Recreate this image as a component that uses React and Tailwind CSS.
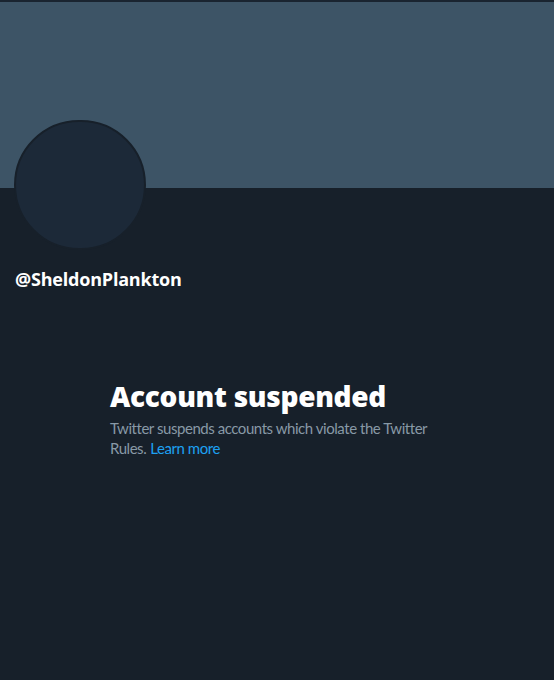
import React from 'react';

const App = () => {
  return (
    <div className="w-[554px] h-[680px] overflow-hidden bg-[#17202a] flex flex-col" style={{ fontFamily: '"Open Sans", "Noto Sans", sans-serif' }}>
      {/* top strip */}
      <div className="h-[2px] bg-[#1a2430]" />

      {/* banner */}
      <div className="h-[186px] bg-[#3d5466]" />

      {/* avatar + handle */}
      <div className="px-[14px]">
        <div className="-mt-[68px] relative w-[132px] h-[130px] rounded-full bg-[#1c2938] border-2 border-[#17202a]" />
        <div className="mt-[19px] pl-px text-white font-bold text-[18px] leading-5 tracking-[-0.2px]">@SheldonPlankton</div>
      </div>

      {/* suspended message */}
      <div className="mt-[89px] pl-[110px] pr-[100px]">
        <h1 className="text-white font-extrabold text-[28px] leading-9 tracking-[-0.3px]">Account suspended</h1>
        <div className="mt-[4px] text-[#8899a6] text-[15px] leading-5 tracking-[-0.45px] w-[330px]" style={{ fontFamily: 'Lato, "Open Sans", sans-serif' }}>
          <p>Twitter suspends accounts which violate the Twitter</p>
          <p className="flex gap-[4px]">
            <span>Rules.</span>
            <span className="text-[#1da1f2]">Learn more</span>
          </p>
        </div>
      </div>
    </div>
  );
};

export default App;
